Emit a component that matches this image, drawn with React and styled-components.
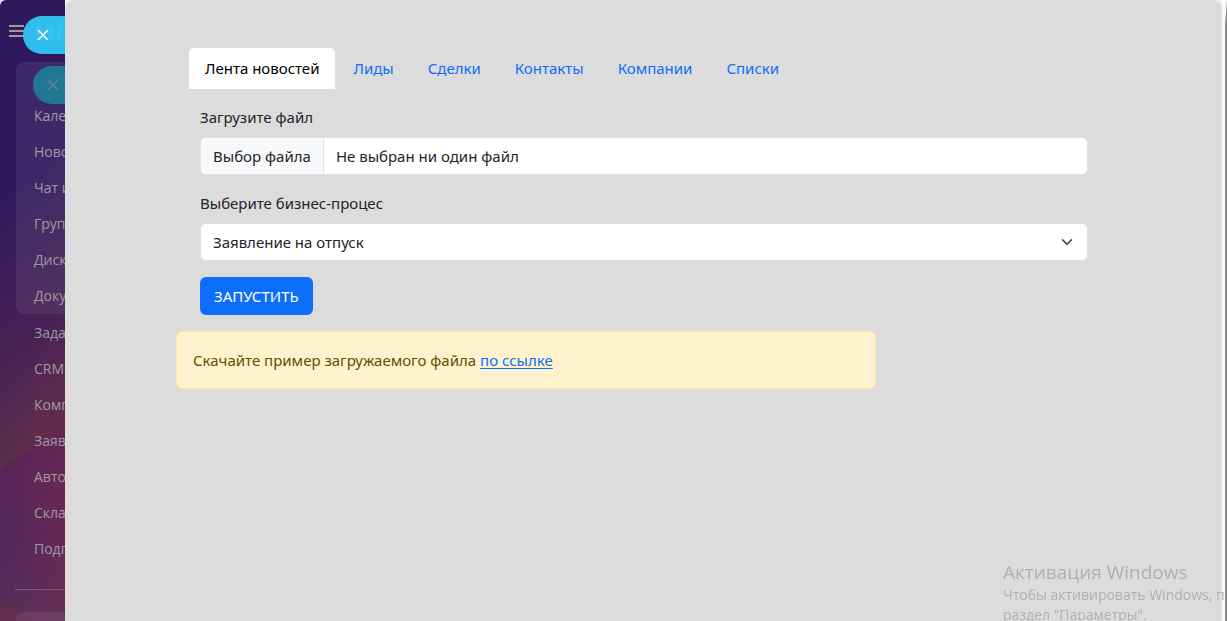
import React, { useState } from "react";
import styled, { createGlobalStyle } from "styled-components";

const GlobalStyle = createGlobalStyle`
  *, *::before, *::after { box-sizing: border-box; }
  body {
    margin: 0;
    background: #2f195c;
    color: #212529;
    font-family: "Noto Sans", "Open Sans", sans-serif;
    font-size: 15px;
    line-height: 24px;
  }
`;

const Page = styled.div`
  display: flex;
  height: 100vh;
  overflow: hidden;
  background: #eef3fa;
`;

const Sidebar = styled.aside`
  position: relative;
  flex: 0 0 65px;
  overflow: hidden;
  border-top-left-radius: 6px;
  color: #9f999f;
  background:
    radial-gradient(40px 24px at 0 621px, rgba(112, 48, 64, 0.6), transparent),
    radial-gradient(60px 180px at 65px 500px, rgba(112, 40, 82, 0.75), transparent),
    linear-gradient(145deg, #2f195c 0%, #2f195c 30%, #4a2354 56%, #5a2f4a 70%, #562458 71%, #52275c 84%, #5e3456 100%);
`;

const Brand = styled.header`
  display: flex;
  align-items: center;
  gap: 10px;
  height: 62px;
  padding-left: 9px;
  font-size: 24px;
  font-weight: 700;
`;

const MenuButton = styled.button`
  display: flex;
  padding: 0;
  border: 0;
  background: none;
  color: inherit;
`;

const MenuGroup = styled.div`
  margin: 0 0 1px 16px;
  padding-left: 18px;
  border-radius: 8px 0 0 8px;
  background: rgba(255, 255, 255, 0.07);
`;

const MenuList = styled.ul`
  margin: 0;
  padding: 0 0 0 ${(p) => (p.$indent ? "34px" : "0")};
  list-style: none;
`;

const MenuLink = styled.a`
  display: block;
  height: 36px;
  color: inherit;
  font-family: "Open Sans", sans-serif;
  font-size: 14px;
  font-weight: 500;
  line-height: 36px;
  text-decoration: none;
  white-space: nowrap;
`;

const Divider = styled.hr`
  height: 1px;
  margin: 22px 0 22px 15px;
  border: 0;
  background: #825475;
`;

const MenuStub = styled.div`
  height: 40px;
  margin-left: 16px;
  border-radius: 8px 0 0 0;
  background: rgba(255, 255, 255, 0.07);
`;

const CloseTab = styled.button`
  position: absolute;
  top: ${(p) => p.$top}px;
  left: ${(p) => p.$left}px;
  right: 0;
  display: flex;
  align-items: center;
  height: 38px;
  padding: 0 0 0 14px;
  border: 0;
  border-radius: 19px 0 0 19px;
  background: ${(p) => (p.$dimmed ? "rgba(29, 123, 149, 0.95)" : "rgba(47, 198, 246, 0.95)")};
  color: ${(p) => (p.$dimmed ? "#5e8797" : "#ffffff")};
`;

const Panel = styled.main`
  flex: 1;
  min-width: 0;
  padding: 47px 0 0 1px;
  border-radius: 9px 9px 0 0;
  background: #dcdcdc;
`;

const Container = styled.div`
  max-width: 960px;
  margin: 0 auto;
  padding: 0 12px;
`;

const Tabs = styled.nav`
  display: flex;
  margin: 0 12px;
  border-bottom: 1px solid #dee2e6;
`;

const Tab = styled.a`
  height: 42px;
  margin-bottom: -1px;
  padding: 8px 16px;
  border: 1px solid ${(p) => (p.$active ? "#dee2e6" : "transparent")};
  border-bottom-color: ${(p) => (p.$active ? "#ffffff" : "transparent")};
  border-radius: 6px 6px 0 0;
  background: ${(p) => (p.$active ? "#ffffff" : "transparent")};
  color: ${(p) => (p.$active ? "#000000" : "#0d6efd")};
  text-decoration: none;
  white-space: nowrap;
`;

const Form = styled.form`
  display: flex;
  flex-direction: column;
  align-items: stretch;
  padding: 16px 24px;
`;

const Field = styled.div`
  display: flex;
  flex-direction: column;
  gap: 8px;
  margin-bottom: 16px;
`;

const FileBox = styled.label`
  position: relative;
  display: flex;
  height: 38px;
  overflow: hidden;
  border: 1px solid #dee2e6;
  border-radius: 6px;
  background: #ffffff;
  line-height: 36px;
`;

const FileInput = styled.input`
  position: absolute;
  inset: 0;
  width: 100%;
  opacity: 0;
`;

const FileButton = styled.span`
  padding: 0 12px;
  border-right: 1px solid #dee2e6;
  background: #f8f9fa;
`;

const FileName = styled.span`
  padding: 0 12px;
`;

const SelectBox = styled.div`
  position: relative;
  display: flex;
`;

const Select = styled.select`
  flex: 1;
  height: 38px;
  padding: 0 36px 0 12px;
  border: 1px solid #dee2e6;
  border-radius: 6px;
  appearance: none;
  background: #ffffff;
  color: inherit;
  font: inherit;
`;

const Chevron = styled.svg`
  position: absolute;
  top: 13px;
  right: 15px;
  pointer-events: none;
`;

const SubmitButton = styled.button`
  align-self: flex-start;
  height: 38px;
  padding: 0 14px;
  border: 0;
  border-radius: 6px;
  background: #0d6efd;
  color: #ffffff;
  font: inherit;
`;

const Alert = styled.div`
  max-width: 700px;
  padding: 16px;
  border: 1px solid #ffe69c;
  border-radius: 6px;
  background: #fff3cd;
  color: #664d03;
`;

const AlertLink = styled.a`
  color: #0d6efd;
  text-underline-offset: 2px;
`;

const Gutter = styled.div`
  flex: 0 0 5px;
  background: #fafafa;
  border-right: 2px solid #8b8b8b;
  border-top: 24px solid #fafafa;
`;

const Activation = styled.div`
  position: fixed;
  right: 0;
  bottom: 0;
  width: 224px;
  height: 61px;
  overflow: hidden;
  color: #b0b0b0;
  font-family: "Open Sans", sans-serif;
  font-size: 14px;
  line-height: 20px;
  white-space: nowrap;
  pointer-events: none;
`;

const ActivationTitle = styled.div`
  font-size: 19px;
  line-height: 25px;
`;

const CloseIcon = () => (
  <svg width="12" height="12" viewBox="0 0 12 12" fill="none" stroke="currentColor" strokeWidth="1.6" aria-hidden="true">
    <path d="M1 1l10 10M11 1L1 11" />
  </svg>
);

const groupItems = ["Кале", "Ново", "Чат и", "Груп", "Диск", "Доку"];
const mainItems = ["Зада", "CRM", "Комп", "Заяв", "Авто", "Скла", "Подп"];
const tabs = ["Лента новостей", "Лиды", "Сделки", "Контакты", "Компании", "Списки"];

const renderItems = (items) =>
  items.map((item) => (
    <li key={item}>
      <MenuLink href="#">{item}</MenuLink>
    </li>
  ));

export default function App() {
  const [active, setActive] = useState(tabs[0]);
  return (
    <Page>
      <GlobalStyle />
      <Sidebar>
        <Brand>
          <MenuButton type="button" aria-label="Меню">
            <svg width="15" height="12" viewBox="0 0 15 12" stroke="currentColor" strokeWidth="2" aria-hidden="true">
              <path d="M0 1h15M0 6h15M0 11h15" />
            </svg>
          </MenuButton>
          Lifo
        </Brand>
        <MenuGroup>
          <MenuLink href="#">Совм</MenuLink>
          <MenuList>{renderItems(groupItems)}</MenuList>
        </MenuGroup>
        <MenuList $indent>{renderItems(mainItems)}</MenuList>
        <Divider />
        <MenuStub />
        <CloseTab type="button" aria-label="Закрыть" $top={66} $left={33} $dimmed>
          <CloseIcon />
        </CloseTab>
        <CloseTab type="button" aria-label="Закрыть" $top={16} $left={23}>
          <CloseIcon />
        </CloseTab>
      </Sidebar>

      <Panel>
        <Container>
          <Tabs>
            {tabs.map((tab) => (
              <Tab key={tab} href="#" $active={tab === active} onClick={() => setActive(tab)}>
                {tab}
              </Tab>
            ))}
          </Tabs>
          <Form onSubmit={(e) => e.preventDefault()}>
            <Field>
              <label htmlFor="file">Загрузите файл</label>
              <FileBox>
                <FileInput id="file" type="file" />
                <FileButton>Выбор файла</FileButton>
                <FileName>Не выбран ни один файл</FileName>
              </FileBox>
            </Field>
            <Field>
              <label htmlFor="process">Выберите бизнес-процес</label>
              <SelectBox>
                <Select id="process">
                  <option>Заявление на отпуск</option>
                </Select>
                <Chevron width="12" height="12" viewBox="0 0 16 16" fill="none" stroke="#343a40" strokeWidth="2" strokeLinecap="round" strokeLinejoin="round" aria-hidden="true">
                  <path d="m2 5 6 6 6-6" />
                </Chevron>
              </SelectBox>
            </Field>
            <SubmitButton type="submit">ЗАПУСТИТЬ</SubmitButton>
          </Form>
          <Alert>
            Скачайте пример загружаемого файла <AlertLink href="#">по ссылке</AlertLink>
          </Alert>
        </Container>
      </Panel>
      <Gutter />

      <Activation>
        <ActivationTitle>Активация Windows</ActivationTitle>
        <div>Чтобы активировать Windows, п</div>
        <div>раздел "Параметры".</div>
      </Activation>
    </Page>
  );
}
